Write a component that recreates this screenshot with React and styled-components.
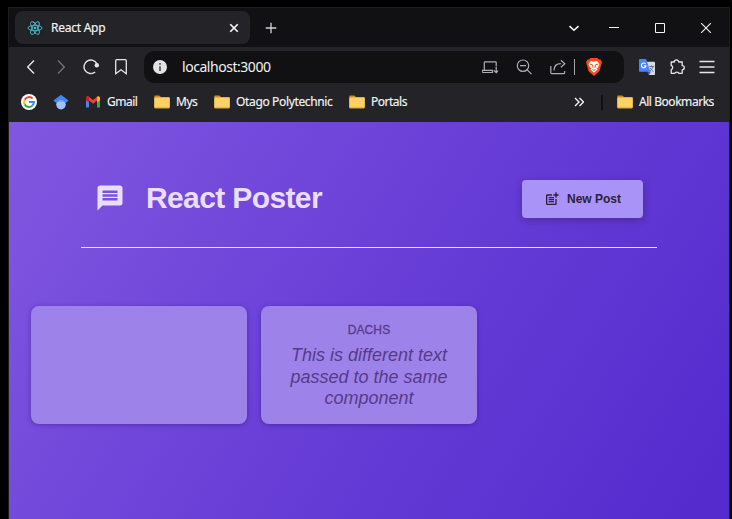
import React from 'react';
import styled, { createGlobalStyle } from 'styled-components';
import { MdMessage, MdPostAdd } from 'react-icons/md';

const GlobalStyle = createGlobalStyle`
  * { box-sizing: border-box; }
  html, body { margin: 0; background: #000; overflow: hidden; }
  svg { display: block; flex: none; }
`;

const ui = `'Noto Sans', 'Open Sans', sans-serif`;
const page = `'Liberation Sans', Arial, sans-serif`;

const Desktop = styled.div`
  height: 519px;
  padding: 7px 2px 0 8px;
  background: #000;
`;

const BrowserWindow = styled.div`
  height: 512px;
  display: flex;
  flex-direction: column;
  border: 1px solid #1d1d1f;
  border-bottom: 0;
  background: #242428;
  color: #f4f4f6;
  font-family: ${ui};
`;

const TabBar = styled.div`
  height: 39px;
  display: flex;
  align-items: center;
  padding: 0 0 0 6px;
  background: #111113;
`;

const Tab = styled.div`
  width: 235px;
  height: 33px;
  padding: 0 11px 0 12px;
  display: flex;
  align-items: center;
  border-radius: 8px;
  background: #242428;
`;

const Label = styled.span`
  font-size: 12px;
  line-height: 16px;
  white-space: nowrap;
  letter-spacing: ${(p) => p.$tracking || 0}px;
  -webkit-text-stroke: 0.15px currentColor;
`;

const TabTitle = styled(Label)`
  margin-left: 8px;
  flex: 1;
`;

const NewTab = styled.div`
  margin-left: 14px;
  flex: 1;
`;

const WindowButton = styled.div`
  width: 46px;
  display: grid;
  place-items: center;
`;

const TabSearch = styled(WindowButton)`
  width: 34px;
`;

const Toolbar = styled.div`
  height: 40px;
  display: flex;
  align-items: center;
  padding: 0 7px;
`;

const ToolButton = styled.div`
  width: 30px;
  height: 30px;
  display: grid;
  place-items: center;
  color: ${(p) => (p.$dim ? '#707076' : '#e6e6ea')};
`;

const AddressBar = styled.div`
  width: 480px;
  height: 32px;
  margin: 0 8px;
  padding: 0 22px 0 9px;
  display: flex;
  align-items: center;
  border-radius: 10px;
  background: #111113;
  color: #aeaeb4;
`;

const Url = styled.span`
  flex: 1;
  margin-left: 15px;
  color: #f1f1f3;
  font-size: 14px;
  line-height: 20px;
  letter-spacing: -0.46px;
`;

const AddressAction = styled.div`
  width: 34px;
  display: grid;
  place-items: center;
`;

const Divider = styled.div`
  width: 1px;
  height: 16px;
  margin: 0 11px 0 -1px;
  background: #a4a4aa;
`;

const BookmarkBar = styled.div`
  height: 35px;
  display: flex;
  align-items: center;
  padding: 0 14px 5px 12px;
`;

const Bookmark = styled.div`
  display: flex;
  align-items: center;
  gap: 6px;
  width: ${(p) => p.$width}px;
`;

const Spacer = styled.div`
  flex: 1;
`;

const BarSeparator = styled.div`
  width: 2px;
  height: 15px;
  margin: 0 14px 0 17px;
  background: #111113;
`;

const Page = styled.main`
  flex: 1;
  padding: 0 22px;
  background: linear-gradient(122deg, #8157e0 0%, #6a40d8 45%, #552bce 96%);
  font-family: ${page};
`;

const Header = styled.header`
  width: 576px;
  height: 126px;
  margin: 0 50px;
  padding: 28px 14px 0;
  display: flex;
  align-items: center;
  justify-content: space-between;
  border-bottom: 1px solid #ede0fb;
`;

const Logo = styled.h1`
  margin: 0 0 2px;
  display: flex;
  align-items: center;
  gap: 21px;
  color: #eadffa;
  font-size: 30px;
  line-height: 34px;
  letter-spacing: -0.62px;
`;

const NewPostButton = styled.button`
  width: 121px;
  height: 38px;
  padding: 0;
  display: flex;
  align-items: center;
  justify-content: center;
  gap: 7px;
  margin-top: 1px;
  border: 0;
  border-radius: 4px;
  background: #a993f6;
  color: #2b2036;
  font: bold 12px ${page};
  box-shadow: 0 2px 8px rgba(0, 0, 0, 0.25);
`;

const Posts = styled.ul`
  margin: 58px 0 0;
  padding: 0;
  display: grid;
  grid-template-columns: repeat(3, 216px);
  gap: 14px;
  list-style: none;
`;

const Post = styled.li`
  height: 118px;
  padding: 16px 14px;
  border-radius: 8px;
  background: #9d82ea;
  color: #573b88;
  text-align: center;
  box-shadow: 0 1px 5px rgba(30, 0, 90, 0.35);
`;

const Author = styled.p`
  margin: 0;
  font-size: 12px;
  line-height: 16px;
  letter-spacing: 0.1px;
  -webkit-text-stroke: 0.3px currentColor;
`;

const Body = styled.p`
  margin: 7px 0 0;
  font-size: 18px;
  font-style: italic;
  line-height: 21.6px;
`;

const Icon = ({ size = 16, children, ...rest }) => (
  <svg width={size} height={size} viewBox="0 0 16 16" fill="none" stroke="currentColor" strokeWidth="1.2" {...rest}>
    {children}
  </svg>
);

const ReactIcon = () => (
  <Icon stroke="#55bdd3" strokeWidth="0.9">
    <rect width="16" height="16" fill="#202326" stroke="none" />
    <ellipse cx="8" cy="8" rx="7" ry="2.7" />
    <ellipse cx="8" cy="8" rx="7" ry="2.7" transform="rotate(60 8 8)" />
    <ellipse cx="8" cy="8" rx="7" ry="2.7" transform="rotate(120 8 8)" />
    <circle cx="8" cy="8" r="1.3" fill="#55bdd3" stroke="none" />
  </Icon>
);

const GoogleIcon = () => (
  <Icon stroke="none">
    <circle cx="8" cy="8" r="8" fill="#fff" />
    <g strokeWidth="2" fill="none">
      <path d="M11.6 4.6A4.9 4.9 0 0 0 3.7 5.7" stroke="#ea4335" />
      <path d="M3.7 5.7A4.9 4.9 0 0 0 3.7 10.4" stroke="#fbbc05" />
      <path d="M3.7 10.4A4.9 4.9 0 0 0 11.4 11.6" stroke="#34a853" />
      <path d="M11.4 11.6A4.9 4.9 0 0 0 12.9 8H8" stroke="#4285f4" />
    </g>
  </Icon>
);

const ScholarIcon = () => (
  <Icon stroke="none">
    <circle cx="8" cy="10.6" r="4.8" fill="#a0c3ff" />
    <path d="M8 .8 15.6 6.6 12.7 9C11 5.4 5 5.4 3.3 9L.4 6.6Z" fill="#4285f4" />
    <path d="M3.3 9C5 5.4 11 5.4 12.7 9c-2.6-1.7-6.8-1.7-9.4 0Z" fill="#76a7fa" />
  </Icon>
);

const GmailIcon = () => (
  <Icon stroke="none">
    <path d="M1 4v9.4h3V7Z" fill="#4285f4" />
    <path d="M15 4v9.4h-3V7Z" fill="#34a853" />
    <path d="M1 4c0-1.6 1.8-2.1 2.9-1.2L8 6l4.1-3.2C13.2 1.9 15 2.4 15 4L8 9.8 1 4Z" fill="#ea4335" />
    <path d="M1 4c0-1.5 1.8-2 3-1.1v5.5L1 6.2Z" fill="#c5221f" />
    <path d="M12 2.9v5.5l3-2.2V4c0-1.5-1.8-2-3-1.1Z" fill="#fbbc04" />
  </Icon>
);

const FolderIcon = () => (
  <Icon stroke="none">
    <path d="M.3 2.5c0-.6.4-1 1-1h4L7 3h8c.5 0 .8.4.8.9V13H.3Z" fill="#d08f1c" />
    <rect x=".3" y="3.6" width="15.4" height="10.6" rx=".8" fill="#fdd068" />
    <path d="M.8 13.8h14.4" stroke="#e0a335" strokeWidth=".9" />
  </Icon>
);

const BraveIcon = () => (
  <svg width="16" height="18" viewBox="0 0 16 18">
    <path d="M4.5 0h7l1.4 1.6 1.5-.1L16 4l-.6 2-2 7.3L8 18l-5.4-4.7L.6 6 0 4l1.6-2.5 1.5.1Z" fill="#f24c18" />
    <path d="m5 3 3 .7L11 3l2.5 3-1.4 3.2-1.5 1.2 1 1L8 14.7 4.4 11.4l1-1-1.5-1.2L2.5 6Z" fill="#fff" />
    <path d="m3.6 6 3 .9.5 3M12.4 6l-3 .9-.5 3M6.5 11.6 8 12.3l1.5-.7" stroke="#f24c18" strokeWidth="1" fill="none" />
  </svg>
);

const TranslateIcon = () => (
  <Icon stroke="none">
    <path d="M6 2.8h9.2c.5 0 .8.3.8.8v11.6c0 .5-.3.8-.8.8H10Z" fill="#d8dade" />
    <path d="M8 12.5h4L10 16Z" fill="#3b57c4" />
    <path d="M.8 0h6.3L11.4 12.7H.8a.8.8 0 0 1-.8-.8V.8C0 .3.3 0 .8 0Z" fill="#4688f1" />
    <path d="M6.6 5A2.3 2.3 0 1 0 7 6.8H4.9" stroke="#fff" strokeWidth="1.1" />
    <path d="M10.3 7.5h4.8M12.6 6.3v1.2M14 7.5c-.4 2-1.5 3.5-3 4.5M11.3 8.8c.7 1.8 1.8 2.9 3.2 3.8" stroke="#5b7180" strokeWidth=".9" />
  </Icon>
);

function Tabs() {
  return (
    <TabBar>
      <Tab>
        <ReactIcon />
        <TabTitle $tracking={-0.25}>React App</TabTitle>
        <Icon size={10} strokeWidth="2.8"><path d="m2 2 12 12M14 2 2 14" /></Icon>
      </Tab>
      <NewTab>
        <Icon size={14} stroke="#d4d4d8" strokeWidth="1.5"><path d="M8 2v12M2 8h12" /></Icon>
      </NewTab>
      <TabSearch>
        <Icon size={12} strokeWidth="2.2"><path d="m2 5.5 6 5.5 6-5.5" /></Icon>
      </TabSearch>
      <WindowButton>
        <Icon size={10} viewBox="0 0 10 10" strokeWidth="1"><path d="M0 4.5h10" /></Icon>
      </WindowButton>
      <WindowButton>
        <Icon size={10} viewBox="0 0 10 10" strokeWidth="1"><path d="M.5.5h9v9h-9Z" /></Icon>
      </WindowButton>
      <WindowButton>
        <Icon size={10} viewBox="0 0 10 10" strokeWidth="1.1"><path d="m0 0 10 10M10 0 0 10" /></Icon>
      </WindowButton>
    </TabBar>
  );
}

function Navigation() {
  return (
    <Toolbar>
      <ToolButton><Icon strokeWidth="1.4"><path d="M11 1.5 4.7 8l6.3 6.5" /></Icon></ToolButton>
      <ToolButton $dim><Icon strokeWidth="1.4"><path d="M5 1.5 11.3 8 5 14.5" /></Icon></ToolButton>
      <ToolButton>
        <Icon strokeWidth="1.4">
          <path d="M12.2 13A6.8 6.8 0 1 1 14 5" />
          <circle cx="13.8" cy="6.3" r="2.2" fill="currentColor" stroke="none" />
        </Icon>
      </ToolButton>
      <ToolButton><Icon strokeWidth="1.3"><path d="M2.7 1.7c0-.7.3-1 1-1h8.6c.7 0 1 .3 1 1v13L8 10.8l-5.3 3.9Z" /></Icon></ToolButton>
      <AddressBar>
        <Icon size={14} stroke="none">
          <circle cx="8" cy="8" r="8" fill="#e3e3e7" />
          <path d="M7 3.5h2v2H7ZM7 7h2v5.5H7Z" fill="#55555a" />
        </Icon>
        <Url>localhost:3000</Url>
        <AddressAction>
          <Icon><path d="M2.3 11V3.6c0-.5.3-.8.8-.8h10.3c.5 0 .8.3.8.8v4M.2 11.3h10.3v2.2H1.4C.7 13.5.2 13 .2 12.3ZM14.2 8v5.5M11.8 11.3l2.4 2.4 2.4-2.4" /></Icon>
        </AddressAction>
        <AddressAction>
          <Icon><circle cx="7" cy="6.7" r="5.7" /><path d="M4 6.7h6M11 10.7l4.5 4.5" /></Icon>
        </AddressAction>
        <AddressAction>
          <Icon><path d="M.8 7v6.4c0 .8.5 1.3 1.3 1.3h11.3c.8 0 1.3-.5 1.3-1.3V12M4 11.5c0-5 3-6.8 6.9-6.8M10.9 1.2 14.8 4.7 10.9 8.2" /></Icon>
        </AddressAction>
        <Divider />
        <BraveIcon />
      </AddressBar>
      <ToolButton><TranslateIcon /></ToolButton>
      <ToolButton>
        <Icon strokeWidth="1.3">
          <path d="M2.2 3h3.1a2.2 2.2 0 0 1 4.4 0h3.5v3.6a2.1 2.1 0 0 1 0 4.2v3.5h-3.4c-.3-1.6-3.7-1.6-4 0H2.2v-3.6c2-.5 2-3.7 0-4.2Z" strokeLinejoin="round" />
        </Icon>
      </ToolButton>
      <ToolButton><Icon strokeWidth="1.3"><path d="M.5 2.5h15M.5 8h15M.5 13.5h15" /></Icon></ToolButton>
    </Toolbar>
  );
}

const folders = [
  { name: 'Mys', width: 60, tracking: -0.5 },
  { name: 'Otago Polytechnic', width: 135, tracking: -0.35 },
  { name: 'Portals', width: 60, tracking: -0.5 },
];

function Bookmarks() {
  return (
    <BookmarkBar>
      <Bookmark $width={32}><GoogleIcon /></Bookmark>
      <Bookmark $width={32}><ScholarIcon /></Bookmark>
      <Bookmark $width={69}><GmailIcon /><Label $tracking={-0.5}>Gmail</Label></Bookmark>
      {folders.map((f) => (
        <Bookmark key={f.name} $width={f.width}>
          <FolderIcon /><Label $tracking={f.tracking}>{f.name}</Label>
        </Bookmark>
      ))}
      <Spacer />
      <Icon size={10} viewBox="0 0 10 10" strokeWidth="1.4"><path d="m1 1 4 4-4 4M5.5 1l4 4-4 4" /></Icon>
      <BarSeparator />
      <Bookmark $width={98}><FolderIcon /><Label $tracking={-0.45}>All Bookmarks</Label></Bookmark>
    </BookmarkBar>
  );
}

export default function App() {
  return (
    <Desktop>
      <GlobalStyle />
      <BrowserWindow>
        <Tabs />
        <Navigation />
        <Bookmarks />
        <Page>
          <Header>
            <Logo><MdMessage size={30} />React Poster</Logo>
            <NewPostButton><MdPostAdd size={16} />New Post</NewPostButton>
          </Header>
          <Posts>
            <Post />
            <Post>
              <Author>DACHS</Author>
              <Body>This is different text passed to the same component</Body>
            </Post>
          </Posts>
        </Page>
      </BrowserWindow>
    </Desktop>
  );
}
